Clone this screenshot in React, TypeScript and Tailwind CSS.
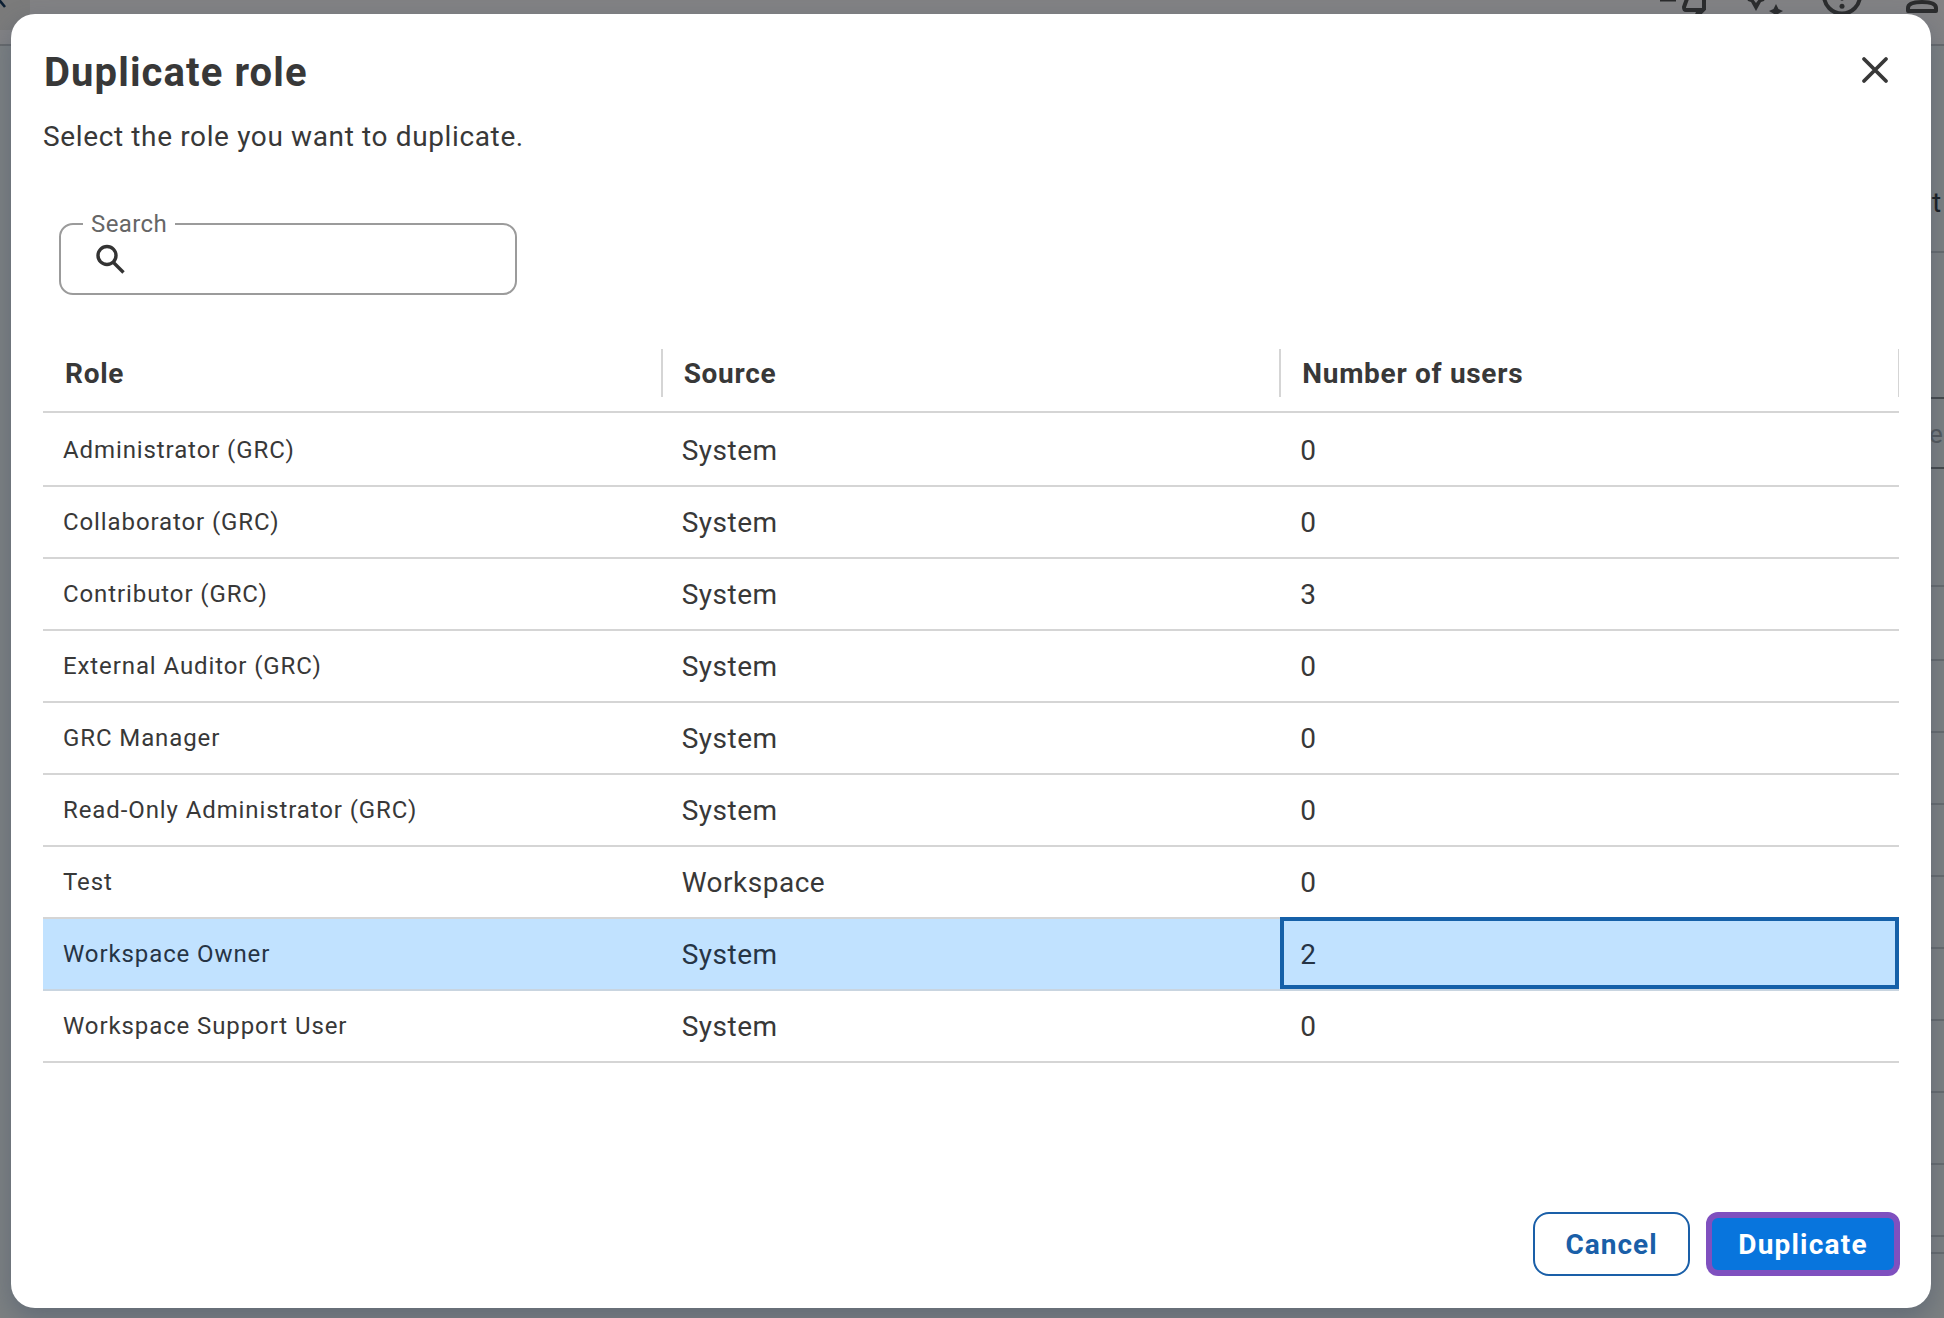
import React from "react";

const rows = [
  ["Administrator (GRC)", "System", "0"],
  ["Collaborator (GRC)", "System", "0"],
  ["Contributor (GRC)", "System", "3"],
  ["External Auditor (GRC)", "System", "0"],
  ["GRC Manager", "System", "0"],
  ["Read-Only Administrator (GRC)", "System", "0"],
  ["Test", "Workspace", "0"],
  ["Workspace Owner", "System", "2"],
  ["Workspace Support User", "System", "0"],
];

const backdropLines = [252, 586, 660, 732, 804, 876, 948, 1020, 1092, 1164, 1236, 1253];

function Backdrop() {
  return (
    <div className="absolute inset-0 bg-[#7c8082]">
      <div className="h-[46px] border-b-2 border-[#66696c] bg-[#828284]" />
      <div className="absolute top-[-34px] left-[-34px] size-[64px] rounded-xl bg-[#7b7b7b]" />
      <svg className="absolute top-0 left-0" width="12" height="10" fill="none" stroke="#0c1f33" strokeWidth="2.6">
        <path d="M-4-4L5 7" />
      </svg>
      <svg className="absolute top-0 left-[1650px]" width="294" height="44" viewBox="0 0 294 44" fill="none" stroke="#2b2c2d" strokeWidth="4">
        <path d="M10 -0.500H26M38-4L34 7Q34 10 36 10H49L46 17L54 9V-4" />
        <path d="M97-1L98 1L101 2L106 11L111 2L114 1L115-1H109L106 3L103-1Z" fill="#2b2c2d" stroke="none" />
        <path d="M126 4L128.500 9L133 11L128.500 13.500L126 18L123.500 13.500L119 11L123.500 9Z" fill="#2b2c2d" stroke="none" />
        <circle cx="192" cy="-4.500" r="18" />
        <circle cx="192" cy="6.300" r="2.500" fill="#2b2c2d" stroke="none" />
        <circle cx="192" cy="-1" r="1.800" fill="#2b2c2d" stroke="none" />
        <path d="M258 11V8Q258 2 272 2Q286 2 286 8V11Z" strokeLinejoin="round" />
      </svg>
      {backdropLines.map((y) => (
        <div key={y} className="absolute right-0 h-[2px] w-10 bg-[#666b6e]" style={{ top: y - 1 }} />
      ))}
      <div className="absolute top-[397px] right-0 h-[72px] w-10 border-y-2 border-[#45494b]" />
      <span className="absolute top-[187px] left-[1932px] text-[28px] leading-8 text-[#171c20]">t</span>
      <span className="absolute top-[418px] left-[1929px] text-[26px] leading-8 text-[#53585b]">e</span>
    </div>
  );
}

export default function App() {
  return (
    <div className="relative h-[1318px] w-[1944px] overflow-hidden pt-[14px] pl-[11px] font-[Roboto,sans-serif] text-[#383838]">
      <Backdrop />
      <div className="relative flex h-[1294px] w-[1920px] flex-col rounded-[24px] bg-white px-8 shadow-[0_10px_24px_rgba(60,75,100,0.4)]">
        <div className="flex items-start justify-between">
          <h1 className="mt-[35px] ml-px text-[40px] leading-[48px] font-bold tracking-[1.1px]">Duplicate role</h1>
          <svg className="mt-[40px] mr-[8px]" width="32" height="32" viewBox="0 0 32 32" fill="none" stroke="#383838" strokeWidth="3.800" strokeLinecap="round">
            <path d="M5 5L27 27M27 5L5 27" />
          </svg>
        </div>
        <p className="mt-[20px] text-[28px] leading-[40px] tracking-[0.63px]">Select the role you want to duplicate.</p>
        <fieldset className="mt-[55px] ml-4 flex h-[83px] w-[458px] items-center rounded-[14px] border-2 border-[#9b9b9b] pt-[8px] pl-[34px]">
          <legend className="-ml-3 px-2 text-[24px] leading-6 tracking-[0.4px] text-[#666]">Search</legend>
          <svg width="30" height="30" viewBox="0 0 30 30" fill="none" stroke="#333" strokeWidth="3.400">
            <circle cx="12" cy="11.500" r="9" />
            <path d="M18 18L28.500 28.500" />
          </svg>
        </fieldset>
        <div className="mt-[40px] h-[78px] overflow-hidden border-b-2 border-[#d5d5d5]">
          <div className="ml-px grid w-full grid-cols-3 pt-[14px]">
            {["Role", "Source", "Number of users"].map((h) => (
              <div key={h} className="flex h-12 items-center border-r-2 border-[#d5d5d5] pt-[2px] pl-[21px] text-[28px] font-bold tracking-[0.7px]">
                {h}
              </div>
            ))}
          </div>
        </div>
        <div className="pt-[2px]">
          {rows.map(([role, source, count]) => {
            const selected = role === "Workspace Owner";
            return (
              <div key={role} className={selected ? "grid h-[72px] grid-cols-3 border-b-2 border-[#c9d5e0] bg-[#c1e2ff] text-[#263445]" : "grid h-[72px] grid-cols-3 border-b-2 border-[#d5d5d5]"}>
                <div className="pt-[15px] pl-5 text-[24px] leading-[40px] tracking-[0.9px]">{role}</div>
                <div className="pt-[16px] pl-5 text-[28px] leading-[40px] tracking-[0.5px]">{source}</div>
                <div className={selected ? "-mt-[2px] h-[72px] border-4 border-[#1560a8] pt-[14px] pl-4 text-[28px] leading-[40px]" : "pt-[16px] pl-5 text-[28px] leading-[40px]"}>{count}</div>
              </div>
            );
          })}
        </div>
        <div className="-mr-px mt-auto mb-8 flex justify-end gap-4 text-[28px] font-bold">
          <button className="h-16 w-[157px] rounded-[16px] border-2 border-[#1a5fa8] pt-[2px] tracking-[1px] text-[#1a5fa8]">Cancel</button>
          <button className="h-16 w-[194px] rounded-[12px] border-[6px] border-[#7f50bf] bg-[#0875dd] pt-[2px] tracking-[1.2px] text-white">Duplicate</button>
        </div>
      </div>
    </div>
  );
}
